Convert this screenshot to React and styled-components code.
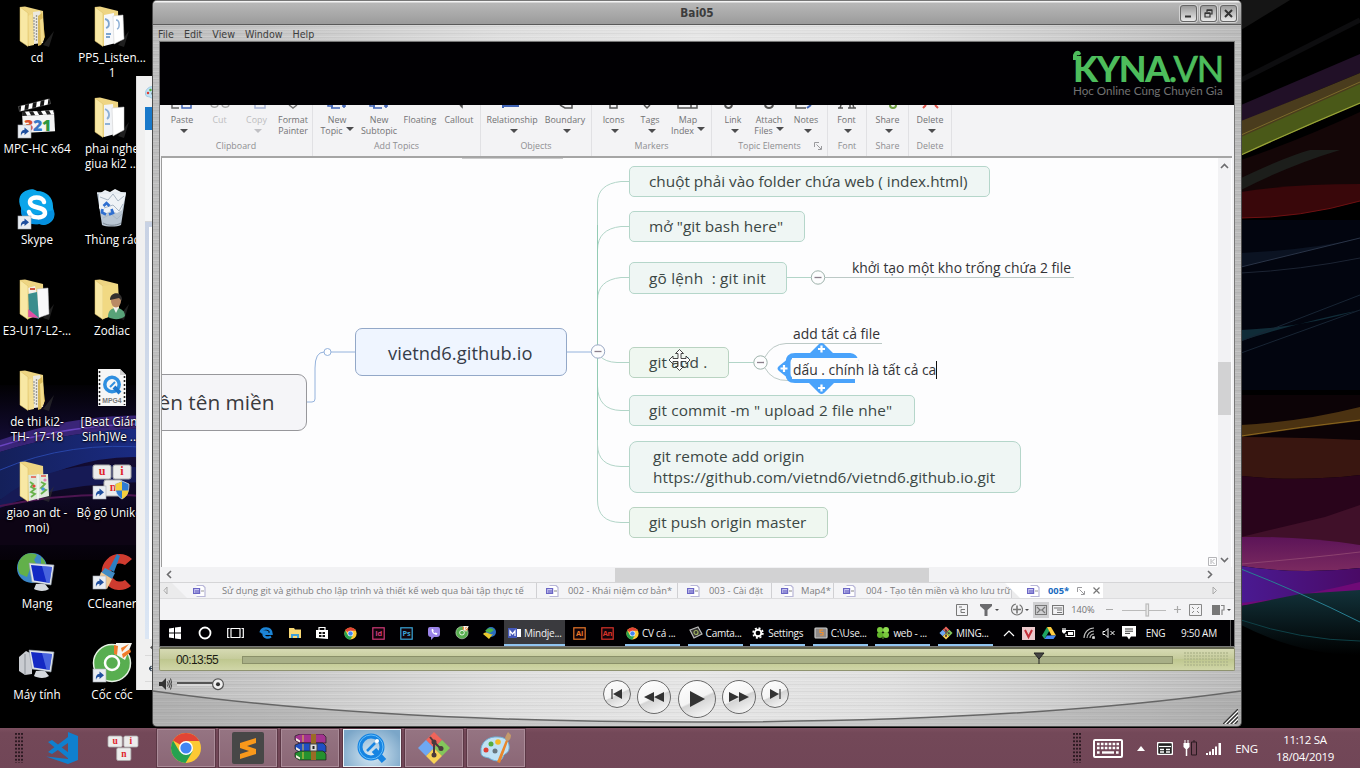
import React from "react";
import styled, { createGlobalStyle, css } from "styled-components";

const UI = `"Open Sans", "Noto Sans", sans-serif`;
const TAHOMA = `"DejaVu Sans Condensed", "Liberation Sans", sans-serif`;

const Global = createGlobalStyle`
  html, body { margin: 0; padding: 0; background: #000; }
  *, *::before, *::after { box-sizing: border-box; }
  svg { display: block; flex: none; }
`;

/* ---------- desktop ---------- */

const Desktop = styled.main`
  position: relative;
  width: 1360px;
  height: 768px;
  overflow: hidden;
  background: #000;
  font-family: ${UI};
  display: flex;
  flex-direction: column;
`;

const Wallpaper = styled.svg`
  position: absolute;
  inset: 0;
`;

const ShortcutGrid = styled.div`
  position: relative;
  flex: none;
  height: 728px;
  display: grid;
  grid-auto-flow: column;
  grid-template-rows: repeat(8, 91px);
  grid-auto-columns: 75px;
  justify-content: start;
  align-content: start;
  padding-top: 3px;
`;

const Shortcut = styled.div`
  display: flex;
  flex-direction: column;
  align-items: center;
  width: 74px;
`;

const ShortcutLabel = styled.span`
  margin-top: -1px;
  font-size: 11.7px;
  line-height: 15px;
  color: #fff;
  white-space: pre;
  text-align: center;
  text-shadow: 0 1px 2px #000, 0 0 2px #000;
`;

const PaintWindow = styled.section`
  position: absolute;
  left: 136px;
  top: 76px;
  width: 30px;
  height: 614px;
  background: #f0f0f0;
  padding-left: 8px;
  border-left: 1px solid #ddd;
`;
const PaintTitle = styled.div`
  height: 31px;
  display: flex;
  align-items: center;
`;
const PaintFile = styled.div`
  height: 23px;
  background: #1979ca;
`;
const PaintRibbon = styled.div`
  height: 92px;
  background: #f5f6f7;
  border-bottom: 1px solid #d5d6d8;
`;
const PaintWork = styled.div`
  height: 417px;
  background: linear-gradient(#c8d2e4, #dbe6f4);
  padding: 5px 0 0 4px;
`;
const PaintSheet = styled.div`
  height: 412px;
  background: #fff;
`;
const PaintFooter = styled.div`
  height: ${(p) => p.$h}px;
  display: flex;
  align-items: center;
  padding-left: 4px;
  background: #f0f0f0;
  border-bottom: 1px solid #dadada;
`;

/* ---------- player window ---------- */

const brushed = css`
  background-image:
    repeating-linear-gradient(180deg, rgba(255,255,255,.16) 0 1px, rgba(0,0,0,.025) 1px 2px, rgba(255,255,255,.05) 2px 4px, rgba(0,0,0,.045) 4px 5px, transparent 5px 7px),
    linear-gradient(90deg, #bdbdbd 0%, #c6c6c6 10%, #dedede 32%, #e6e6e6 50%, #dfdfdf 68%, #c6c6c6 90%, #bababa 100%);
`;

const Player = styled.section`
  position: absolute;
  left: 152px;
  top: 0;
  width: 1090px;
  height: 727px;
  border: 1px solid #4c4c4c;
  border-top-color: #777;
  border-radius: 5px;
  overflow: hidden;
  ${brushed}
  display: flex;
  flex-direction: column;
`;

const TitleBar = styled.header`
  height: 24px;
  flex: none;
  display: grid;
  grid-template-columns: 1fr auto 1fr;
  align-items: center;
  background: linear-gradient(#f4f4f4 0 1px, #b8b8b8 2px, #9b9b9b 100%);
  border-bottom: 1px solid #5a5a5a;
`;
const Title = styled.h1`
  grid-column: 2;
  margin: 1px 0 0;
  font: bold 11.7px/16px ${TAHOMA};
  color: #3c3c3c;
`;
const WindowButtons = styled.div`
  display: flex;
  justify-content: flex-end;
  gap: 3px;
  padding: 1px 4px 0 0;
`;
const WindowButton = styled.button`
  width: 17px;
  height: 17px;
  padding: 0;
  display: grid;
  place-items: center;
  border: 1px solid #666;
  border-radius: 3px;
  background: linear-gradient(#9b9b9b, #e8e8e8);
  box-shadow: 0 0 0 1px #d2d2d2;
`;

const MenuBar = styled.nav`
  height: 17px;
  flex: none;
  display: flex;
  gap: 10px;
  padding-left: 5px;
  font: 10.6px/19px ${TAHOMA};
  color: #3d3d3d;
`;

const Screen = styled.div`
  width: 1074px;
  height: 604px;
  flex: none;
  margin-left: 7px;
  background: #f3f3f5;
  display: flex;
  flex-direction: column;
  box-shadow: 0 0 0 1px #777;
`;

const Banner = styled.div`
  height: 63px;
  flex: none;
  background: #010003;
  display: flex;
  flex-direction: column;
  align-items: flex-end;
  padding: 10px 11px 0 0;
`;
const Brand = styled.div`
  position: relative;
  width: 150px;
  height: 32px;
  display: flex;
  font: 900 36px/32px Lato, sans-serif;
  letter-spacing: -1.5px;
  color: #4dbd5c;
  white-space: nowrap;
`;
const BrandSuffix = styled.span`
  font-weight: 400;
  letter-spacing: -1.1px;
  -webkit-text-stroke: 0.7px #4dbd5c;
`;
const Leaf = styled.svg`
  position: absolute;
  left: 0;
  top: -2px;
`;
const Tagline = styled.div`
  width: 150px;
  font: 11.65px/13px Lato, sans-serif;
  color: #717171;
  white-space: nowrap;
`;

/* ---------- ribbon ---------- */

const Ribbon = styled.div`
  height: 51px;
  flex: none;
  display: flex;
  background: #f3f3f5;
  font-size: 8.9px;
  line-height: 11px;
  color: #727274;
`;
const RibbonGroup = styled.div`
  width: ${(p) => p.$w}px;
  display: flex;
  flex-direction: column;
  border-right: 1px solid #e1e1e4;
`;
const RibbonItems = styled.div`
  display: flex;
  height: 35px;
  padding-left: ${(p) => p.$pad}px;
`;
const RibbonItem = styled.div`
  width: ${(p) => p.$w}px;
  flex: none;
  display: flex;
  flex-direction: column;
  align-items: center;
  white-space: nowrap;
  color: ${(p) => (p.$off ? "#bdbdc0" : "#727274")};
`;
const RibbonText = styled.span`
  margin-top: 4px;
  text-align: center;
`;
const Second = styled.span`
  display: flex;
  align-items: flex-start;
  gap: 3px;
  height: 11px;
`;
const Caret = styled.i`
  width: 0;
  height: 0;
  border: ${(p) => p.$s ?? 4}px solid transparent;
  border-top-color: ${(p) => (p.$off ? "#c0c0c4" : "#4c4c4e")};
  border-bottom: 0;
  margin-top: ${(p) => p.$top ?? 4}px;
  margin-left: ${(p) => p.$left ?? 0}px;
`;
const RibbonCaption = styled.div`
  display: flex;
  justify-content: center;
  position: relative;
  color: #8e8e91;
  white-space: nowrap;
`;
const Launcher = styled.span`
  position: absolute;
  right: 5px;
  top: 2px;
`;

/* ---------- mind map ---------- */

const MapArea = styled.div`
  height: 411px;
  flex: none;
  display: flex;
  margin-left: 1px;
  margin-right: 2px;
  border-top: 2px solid #a5a5a5;
  border-left: 1px solid #9c9c9c;
  background: #fdfdfe;
`;
const Canvas = styled.div`
  position: relative;
  width: 1056px;
  height: 409px;
  overflow: hidden;
`;
const Lines = styled.svg`
  position: absolute;
  left: 0;
  top: 0;
`;
const tones = {
  green: ["#eff6f4", "#b5d6ca", "#3b4744"],
  lime: ["#eff7f0", "#b9d3c1", "#3b4744"],
  blue: ["#eff5ff", "#93a8c8", "#353c49"],
  gray: ["#f5f5f8", "#97979b", "#3a3a3d"],
};
const Topic = styled.div`
  position: absolute;
  left: ${(p) => p.$x - 162}px;
  top: ${(p) => p.$y - 158}px;
  width: ${(p) => p.$w}px;
  height: ${(p) => p.$h}px;
  padding-left: ${(p) => p.$pad ?? 19}px;
  display: flex;
  align-items: center;
  border: 1px solid ${(p) => tones[p.$tone][1]};
  border-radius: ${(p) => p.$r ?? 5}px;
  background: ${(p) => tones[p.$tone][0]};
  color: ${(p) => tones[p.$tone][2]};
  font-size: ${(p) => p.$size ?? 15.35}px;
  letter-spacing: ${(p) => p.$ls ?? 0}px;
  line-height: 21px;
  white-space: pre;
`;
const Note = styled.div`
  position: absolute;
  left: ${(p) => p.$x - 162}px;
  top: ${(p) => p.$y - 158}px;
  font-size: 13.9px;
  line-height: 20px;
  color: #333336;
  white-space: nowrap;
`;
const VScroll = styled.div`
  width: 13px;
  display: flex;
  flex-direction: column;
  align-items: center;
  background: #f2f2f4;
  padding: 4px 0 3px;
`;
const VThumb = styled.div`
  width: 13px;
  height: 53px;
  margin: 191px 0 auto;
  background: #d2d2d3;
`;
const HScroll = styled.div`
  height: 15px;
  flex: none;
  display: flex;
  align-items: center;
  background: #f2f2f4;
  margin-left: 2px;
  padding: 0 20px 0 3px;
`;
const HThumb = styled.div`
  width: 314px;
  height: 14px;
  margin: 0 auto 0 441px;
  background: #d2d2d3;
`;

/* ---------- document tabs and status ---------- */

const Tabs = styled.div`
  height: 17px;
  flex: none;
  display: flex;
  align-items: stretch;
  background: #ebebec;
  border-bottom: 1px solid #dcdcde;
  border-top: 1px solid #d5d5d7;
  font-size: 9.35px;
  color: #7d7d80;
`;
const TabArrow = styled.div`
  width: ${(p) => p.$w}px;
  display: flex;
  align-items: center;
  padding-left: ${(p) => p.$pad}px;
`;
const Tab = styled.div`
  width: ${(p) => p.$w}px;
  display: flex;
  align-items: center;
  flex: none;
  gap: ${(p) => p.$gap ?? 9}px;
  padding-left: ${(p) => p.$pad ?? 9}px;
  background: ${(p) => (p.$on ? "#fff" : "#f4f4f6")};
  color: ${(p) => (p.$on ? "#1b6bc0" : "inherit")};
  font-weight: ${(p) => (p.$on ? 700 : 400)};
  border-right: 1px solid ${(p) => (p.$on ? "#fff" : "#d0d0d3")};
  clip-path: ${(p) => (p.$slant ? `polygon(0 0, 100% 0, 100% 100%, ${p.$slant}px 100%)` : "none")};
  margin-left: ${(p) => p.$ml ?? 0}px;
  white-space: nowrap;
`;
const StatusBar = styled.div`
  height: 21px;
  flex: none;
  display: flex;
  justify-content: flex-end;
  align-items: center;
  padding-right: 2px;
  font-size: 9.2px;
  color: #727274;
`;
const StatusCell = styled.div`
  width: ${(p) => p.$w}px;
  margin-right: ${(p) => p.$mr ?? 0}px;
  height: 16px;
  flex: none;
  display: flex;
  align-items: center;
  justify-content: center;
  background: ${(p) => (p.$on ? "#d0d0d2" : "none")};
`;

/* ---------- recorded taskbar ---------- */

const MiniBar = styled.div`
  height: 26px;
  flex: none;
  display: flex;
  background: #010003;
  color: #f2f2f2;
  font-size: 10px;
  letter-spacing: -0.25px;
`;
const MiniCell = styled.div`
  width: ${(p) => p.$w}px;
  display: grid;
  place-items: center;
  flex: none;
`;
const MiniTask = styled.div`
  width: ${(p) => p.$w ?? 55}px;
  flex: none;
  display: flex;
  align-items: center;
  gap: 3px;
  padding: 2px 0 0 ${(p) => (p.$on ? 4 : 1)}px;
  background: ${(p) => (p.$on ? "#3a3a3e" : "none")};
  border-bottom: 2px solid #91c5f0;
  white-space: nowrap;
`;
const MiniTasks = styled.div`
  display: flex;
  gap: 7.6px;
  margin: 0 6px 0 4px;
`;
const PeekEdge = styled.div`
  margin-left: 4px;
  width: 1px;
  background: #555;
`;

/* ---------- player controls ---------- */

const TimeBar = styled.div`
  height: 24px;
  flex: none;
  margin: 1px 6px 0 6px;
  display: flex;
  align-items: center;
  border: 1px solid #8f936f;
  border-top: 2px solid #63654f;
  border-radius: 2px;
  background: linear-gradient(#d6dab3, #c6cc9c 45%, #bfc78f 50%, #d0d6a8);
`;
const Elapsed = styled.span`
  width: 82px;
  padding-left: 16px;
  font: 12px/16px "Liberation Sans", sans-serif;
  letter-spacing: -0.58px;
  color: #1b1b14;
`;
const Track = styled.div`
  position: relative;
  width: 931px;
  height: 8px;
  background: #a8af87;
  border: 1px solid #8a9069;
`;
const Playhead = styled.svg`
  position: absolute;
  left: 790px;
  top: -5px;
`;
const TimeDots = styled.div`
  margin-left: 11px;
  width: 44px;
  height: 15px;
  background-image: radial-gradient(circle at 1px 1px, #adb48a 0.6px, transparent 0.9px);
  background-size: 3px 3px;
`;

const Controls = styled.div`
  position: relative;
  flex: 1;
  display: grid;
  grid-template-columns: 1fr auto 1fr;
`;
const Sweep = styled.svg`
  position: absolute;
  left: 0;
  bottom: 0;
`;
const Volume = styled.div`
  position: relative;
  display: flex;
  align-items: flex-start;
  gap: 4px;
  padding: 6px 0 0 5px;
`;
const Transport = styled.div`
  position: relative;
  display: flex;
  align-items: flex-start;
  padding: 9px 2px 0 0;
`;
const Round = styled.button`
  width: ${(p) => p.$d}px;
  height: ${(p) => p.$d}px;
  margin: 0 ${(p) => p.$mr ?? 0}px 0 0;
  padding: 0;
  display: grid;
  place-items: center;
  border: 1.5px solid #6a6a6a;
  border-radius: 50%;
  background: linear-gradient(155deg, #fff 0%, #f4f4f4 50%, #d4d4d4 54%, #ffffff 100%);
`;
const Resize = styled.svg`
  position: absolute;
  right: 3px;
  bottom: 2px;
`;

/* ---------- host taskbar ---------- */

const Taskbar = styled.footer`
  position: relative;
  height: 40px;
  flex: none;
  display: flex;
  align-items: center;
  background: linear-gradient(#7c4f60, #734858 12%, #714657);
  color: #fff;
  font-size: 11.5px;
`;
const Grip = styled.div`
  width: 9px;
  height: 30px;
  margin: 0 ${(p) => p.$mr ?? 0}px 0 ${(p) => p.$ml ?? 0}px;
  background-image: radial-gradient(circle at 1px 1px, #2d1a22 0.9px, transparent 1.2px);
  background-size: 3px 3.7px;
`;
const Pinned = styled.div`
  width: 61px;
  display: grid;
  place-items: center;
`;
const TaskButtons = styled.div`
  display: flex;
  gap: 4px;
  margin-left: 4px;
`;
const TaskButton = styled.div`
  width: 58px;
  height: 38px;
  display: grid;
  place-items: center;
  border: 1px solid ${(p) => (p.$on ? "#e9f2f8" : "#ab8c99")};
  box-shadow: 0 0 0 1px #5b3745;
  background: ${(p) => (p.$on ? "radial-gradient(ellipse at 50% 70%, #d7e9f5, #7ba6c8 85%)" : "linear-gradient(#957482, #8b6776)")};
`;
const Tray = styled.div`
  margin-left: auto;
  display: flex;
  align-items: center;
`;
const TrayCell = styled.div`
  width: ${(p) => p.$w}px;
  display: grid;
  place-items: center;
  letter-spacing: -0.25px;
`;
const Clock = styled.div`
  width: 97px;
  text-align: center;
  line-height: 17px;
  letter-spacing: -0.28px;
  padding-right: 13px;
`;

/* ---------- drawings ---------- */

const Arrow = ({ x = 5, y = 32 }) => (
  <g transform={`translate(${x} ${y})`}>
    <rect width="13" height="13" fill="#e9edf2" stroke="#a8adb5" strokeWidth=".6" />
    <path d="M3 11c-.5-4 1-6 3.500-6.200V2.500l4.500 3.800-4.500 3.800V7.800C4.500 7.800 3.500 9 3 11Z" fill="#1f4f9e" />
  </g>
);

const Folder = ({ kind }) => (
  <svg width="48" height="48" viewBox="0 0 48 48">
    <path d="M30 42 41 28 36 44Z" fill="#333" opacity=".6" />
    <path d="M7 4 12 3.500 30 8 31 37 15 43Z" fill="#eed583" />
    {kind === "stack" && (
      <>
        <path d="M20 9 27 8 31 30 30 40 21 41Z" fill="#ece9df" />
        <path d="M21 14v24M23.500 12v26" stroke="#9a9a94" strokeWidth="1.300" strokeDasharray="2 1" />
        <path d="M15 13 19 11 21 42 16 43Z" fill="#f4df94" />
        <path d="M25 13 29 10 32 34 28 42 25 43Z" fill="#d9b95a" />
        <path d="M27 17 30 15 31 36 28 41Z" fill="#f3dc8d" />
      </>
    )}
    {kind === "docs" && (
      <>
        <path d="M16 12 26 10 28 40 16 43Z" fill="#f7f8fa" />
        <path d="M17 16c5 1 5 8 1 9m0 6h5m-5 3h4" stroke="#7ea5cf" strokeWidth="1.800" fill="none" />
        <path d="M25 13 35 12 36 36 26 41Z" fill="#fff" stroke="#c8c8c8" strokeWidth=".5" />
        <path d="M28 17c4 0 4 8 1 9" stroke="#8fb1d6" strokeWidth="1.500" fill="none" />
      </>
    )}
    {kind === "blank" && (
      <>
        <path d="M16 11 25 10 27 40 16 43Z" fill="#f1f3f6" />
        <path d="M17 15c5 2 5 8 2 10m-2 5h5" stroke="#8fb1d6" strokeWidth="1.800" fill="none" />
        <path d="M24 14 36 13 36 36 25 42Z" fill="#fff" stroke="#c8c8c8" strokeWidth=".5" />
      </>
    )}
    {kind === "books" && (
      <>
        <path d="M15 12 22 10 24 20 16 20Z" fill="#f3efe9" />
        <path d="M17 12h5v2h-5z" fill="#d05740" />
        <path d="M24 13 35 12 36 38 25 42Z" fill="#f8f8fa" stroke="#c0c0c4" strokeWidth=".5" />
        <path d="M15 18 24 16 26 43 16 40Z" fill="#3a8d8e" />
        <path d="M15 33 26 42 15 41Z" fill="#e04fa5" />
      </>
    )}
    {kind === "pictures" && (
      <>
        <path d="M15 17 35 16 36 38 16 43Z" fill="#dfe9da" />
        <path d="M25 16v26" stroke="#fff" />
        <path d="M17 24l3 2-2 3 4 2-4 3 4 2-4 3M28 24l4 2-4 4 5 2-5 4" stroke="#68b24a" strokeWidth="1.800" fill="none" />
        <path d="M18 19h5M28 18h5" stroke="#e2564a" strokeWidth="1.600" />
        <circle cx="21" cy="28" r="1.600" fill="#e0473b" />
        <circle cx="30" cy="31" r="1.800" fill="#4796d8" />
        <circle cx="32" cy="22" r="1.600" fill="#e77bb5" />
      </>
    )}
    <path d="M7 4 15 10 15 43.500 7 38Z" fill="#f8e8a4" stroke="#d8bd62" strokeWidth=".5" />
    {kind === "person" && (
      <>
        <path d="M15 10 30 8 31 37 15 43Z" fill="#f1d983" />
        <path d="M20 41c0-7 4-9 8-9 5 0 9 3 9 8-4 4-12 4-17 1Z" fill="#58a278" />
        <path d="M25 31h6l-3 6Z" fill="#f2f2ee" />
        <ellipse cx="28" cy="25" rx="5" ry="6.500" fill="#b98a64" />
        <path d="M22 24c0-9 13-9 12 1l-3-3c-3 1-6 1-9 2Z" fill="#33302f" />
      </>
    )}
  </svg>
);

const Clapper = () => (
  <svg width="48" height="48" viewBox="0 0 48 48">
    <g transform="rotate(-14 8 15)">
      <rect x="6" y="12" width="32" height="5" fill="#141414" stroke="#888" strokeWidth=".4" />
      <path d="M9 12h4l-2 5H7zM17 12h4l-2 5h-4zM25 12h4l-2 5h-4zM33 12h4l-2 5h-4z" fill="#fff" />
    </g>
    <g transform="rotate(-3 8 18)">
      <path d="M9 18h32v21H9Z" fill="#f4f4f4" />
      <path d="M9 18h32v4H9Z" fill="#222" />
      <path d="M12 18h4l2 4h-4zM20 18h4l2 4h-4zM28 18h4l2 4h-4zM36 18h4l1 4h-3z" fill="#fff" />
    </g>
    <text x="11" y="36.500" fontFamily="Open Sans" fontWeight="800" fontSize="16" letterSpacing="-.4">
      <tspan fill="#d9502c">3</tspan><tspan fill="#3877c8">2</tspan><tspan fill="#2d9842">1</tspan>
    </text>
    <Arrow y={31} />
  </svg>
);

const Skype = () => (
  <svg width="48" height="48" viewBox="0 0 48 48">
    <path d="M15 5c3-1 6-1 9 1 10 0 16 7 16 15 0 3 1 4 1.500 8 0 8-8 13-15 10C14 41 7 33 8 23 4 14 7 7 15 5Z" fill="#0aa5ea" />
    <path d="M8 23c10 12 22 4 33 2 2 9-5 17-15 14C14 41 7 33 8 23Z" fill="#0080d6" opacity=".6" />
    <path d="M31 17c-1-6-14-6-14 0 0 7 15 4 15 11 0 6-14 6-16-1" fill="none" stroke="#fff" strokeWidth="4.500" strokeLinecap="round" />
    <Arrow y={31} />
  </svg>
);

const Bin = () => (
  <svg width="48" height="48" viewBox="0 0 48 48">
    <path d="M9 8 38 8 33 40C29 42 18 42 14 40Z" fill="#b9c6d3" />
    <path d="m11 9 6-4 5 2 5-3 6 3 5 1-4 17-5 3-6-2-7 3-5-6Z" fill="#eef2f6" />
    <path d="m12 12 8 3 5-6 5 7 6-5m-20 12 9-3 6 6 4-7M15 33l8-4 6 5 5-5" stroke="#a9b7c5" fill="none" />
    <path d="M9 8h29" stroke="#e4ebf2" strokeWidth="1.500" />
    <path d="m15.500 21 3-3 3 3m2 3 1.500 4-4 1.500m-3 0-4-2 .5-3.500" stroke="#2f6fd0" strokeWidth="2.600" fill="none" />
    <path d="M15 38c5 3 13 3 18 0" stroke="#7f8b97" fill="none" />
  </svg>
);

const Mpeg = () => (
  <svg width="48" height="48" viewBox="0 0 48 48">
    <path d="M10 2h22l6 6v31H10Z" fill="#f6f6f6" />
    <path d="M11.500 4v34M36.500 9v29" stroke="#222" strokeWidth="1.600" strokeDasharray="2 2" />
    <path d="M32 2v6h6Z" fill="#cfcfcf" />
    <circle cx="24" cy="17.500" r="7.200" fill="none" stroke="#2f8fe0" strokeWidth="3.500" />
    <path d="m26 20 6 6" stroke="#1c76cc" strokeWidth="4" />
    <path d="m22 20 5-5" stroke="#2f8fe0" strokeWidth="2" />
    <text x="24" y="36" textAnchor="middle" fontSize="6.800" fontWeight="700" fontFamily="Liberation Sans" fill="#777">MPG4</text>
  </svg>
);

const Keys = ({ s = 1 }) => (
  <g transform={`scale(${s})`} fontFamily="Liberation Serif" fontWeight="700" fontSize="12" fill="#e0242d" textAnchor="middle">
    <rect x="0" y="0" width="18" height="14" rx="2" fill="#ececec" stroke="#aaa" />
    <rect x="20" y="0" width="18" height="14" rx="2" fill="#ececec" stroke="#aaa" />
    <rect x="11" y="15" width="18" height="16" rx="2" fill="#ececec" stroke="#aaa" />
    <text x="9" y="10">u</text><text x="29" y="10">i</text><text x="20" y="26">n</text>
  </g>
);
const Unikey = () => (
  <svg width="48" height="48" viewBox="0 0 48 48">
    <g transform="translate(5 7)"><Keys /></g>
    <path d="m27 26 7-3 7 3c0 8-2 12-7 15-5-3-7-7-7-15Z" fill="#2f7bd2" stroke="#eee" strokeWidth=".7" />
    <path d="M34 23.500 27.500 26v6.500H34V41c5-3 6-5 6.500-8.500H34Z" fill="#f5cf3c" />
    <Arrow y={28} />
  </svg>
);

const Monitor = ({ x, y }) => (
  <g transform={`translate(${x} ${y})`}>
    <path d="M7 21h9l4 5c-4 3-12 2-15 0Z" fill="#d5d9de" />
    <path d="M0 0 25 2 22 22 3 19Z" fill="#dfe5eb" stroke="#8e98a5" strokeWidth=".6" />
    <path d="M2 2 23 4 20.500 20 5 17.500Z" fill="#1329c4" />
    <path d="m13 3 10 1-2.500 16-3-.5Z" fill="#6d8cf0" opacity=".6" />
  </g>
);
const Network = () => (
  <svg width="48" height="48" viewBox="0 0 48 48">
    <circle cx="19" cy="19" r="15" fill="#3b86c8" />
    <path d="M9 8c5-5 12-4 15-2l-3 5 3 5-7 4-3 8-7-3C4 20 4 13 9 8ZM28 8c4 3 6 8 5 12l-5-3Z" fill="#62b04a" />
    <Monitor x={16} y={14} />
  </svg>
);
const Computer = () => (
  <svg width="48" height="48" viewBox="0 0 48 48">
    <path d="m6 17 7-6 6 3v20l-7 1-6-4Z" fill="#c9ccd1" />
    <path d="M12 14v21" stroke="#8b9097" />
    <Monitor x={16} y={10} />
  </svg>
);
const CCleaner = () => (
  <svg width="48" height="48" viewBox="0 0 48 48">
    <path d="M44 10a18 18 0 1 0-1 27l-6-6a9 9 0 1 1 0-15Z" fill="#cf3b2f" />
    <path d="m29 5 3 2-6 16-5-3Z" fill="#2c7fc2" />
    <path d="m17 19 10 5-3 6-11-6Z" fill="#408bc5" />
    <path d="m13 23 11 7-5 10-10-5Z" fill="#f0c894" />
    <Arrow y={27} />
  </svg>
);
const CocCoc = ({ size = 48, bare }) => (
  <svg width={size} height={size} viewBox="0 0 48 48">
    <circle cx="24" cy="23" r="18.500" fill="#58ae50" stroke="#e6f2e4" strokeWidth="1.500" />
    <path d="M27 14 28 3 44 3 37 20Z" fill="#f5f5f0" />
    <path d="m26 5 4 1-1 9-3-1ZM34 14l8-5 1 3-8 6ZM33 8l8-4-7 8z" fill="#f07c2b" />
    <circle cx="24" cy="23" r="7" fill="#58ae50" stroke="#fff" strokeWidth="2.500" />
    {!bare && <Arrow y={29} />}
  </svg>
);

const Chrome = ({ size }) => (
  <svg width={size} height={size} viewBox="0 0 32 32">
    <circle cx="16" cy="16" r="15" fill="#fcc934" />
    <path d="M16 16 3 8.500A15 15 0 0 1 29 8.500L29 9H16Z" fill="#e24435" />
    <path d="M3 8.500A15 15 0 0 0 15.500 31L22.500 19.500 16 16 9.500 19.500Z" fill="#26a150" />
    <circle cx="16" cy="16" r="7" fill="#fff" />
    <circle cx="16" cy="16" r="5.600" fill="#4285f4" />
  </svg>
);
const VSCode = () => (
  <svg width="32" height="32" viewBox="0 0 32 32" fill="#0f80cf">
    <path d="M22 0 32 4v24l-10 4L0 24.500l22 2.500Z" />
    <path d="m2 10 4-2 17 13v6ZM2 20 22 5v6L6 22Z" />
  </svg>
);
const Sublime = () => (
  <svg width="32" height="32" viewBox="0 0 32 32">
    <rect width="32" height="32" rx="2" fill="#474747" />
    <path d="m8 11 16-5v5l-9 3 9 3v5L8 27v-5l9-3-9-3Z" fill="#f9981b" />
  </svg>
);
const WinRar = () => (
  <svg width="33" height="28" viewBox="0 0 33 28">
    {[["#a3338f", 1], ["#1f4fc4", 10], ["#25912f", 18]].map(([c, y]) => (
      <g key={c}>
        <path d={`M1 ${y + 1}L6 ${y - 1}H29L32 ${y + 2}V${y + 8}H5L1 ${y + 5}Z`} fill={c} stroke="#1d1d1d" strokeWidth=".7" />
        <path d={`M2 ${y + 3}l4 2.500v2l-4-2z`} fill="#f4efe0" />
        <path d={`M9 ${y}v7`} stroke="#e2bf43" />
      </g>
    ))}
    <path d="M17 0h5v26h-5Z" fill="#9a6b25" />
    <rect x="16" y="10" width="7" height="7" fill="#ddd" stroke="#444" />
    <path d="M19.500 12v3" stroke="#222" strokeWidth="2" />
  </svg>
);
const QuickTime = () => (
  <svg width="30" height="30" viewBox="0 0 30 30">
    <circle cx="14" cy="14" r="11" fill="none" stroke="#1684e2" strokeWidth="5" />
    <path d="m17 17 10 11" stroke="#1684e2" strokeWidth="6" />
    <circle cx="14" cy="14" r="12" fill="none" stroke="#63bdfa" strokeWidth="1" />
    <path d="m10 18 8-8" stroke="#1684e2" strokeWidth="2.500" />
    <circle cx="20" cy="8" r="2" fill="#fff" />
  </svg>
);
const Git = ({ size = 34 }) => (
  <svg width={size} height={size} viewBox="0 0 34 34">
    <path d="m17 1 8 8-8 8-8-8Z" fill="#f0645a" />
    <path d="m25 9 8 8-8 8-8-8Z" fill="#83c65b" />
    <path d="m9 9 8 8-8 8-8-8Z" fill="#6ea8f2" />
    <path d="m17 17 8 8-8 8-8-8Z" fill="#f6d257" />
    <path d="M13 6l4 5v14M17 11l6 6" stroke="#4a3a3c" strokeWidth="2" fill="none" />
    <circle cx="17" cy="11" r="2.500" fill="#4a3a3c" /><circle cx="24" cy="17.500" r="2.500" fill="#4a3a3c" /><circle cx="17" cy="24" r="2.500" fill="#4a3a3c" />
  </svg>
);
const Palette = ({ size = 32 }) => (
  <svg width={size} height={size} viewBox="0 0 32 32">
    <path d="M1 20C0 10 9 4 18 5c8 0 12 5 11 12-1 5-5 4-6 8-2 6-10 4-14 1-4-1-8-1-8-6Z" fill="#bfe1f4" stroke="#6fb1d6" />
    <circle cx="6" cy="18" r="2.500" fill="#dd3f34" /><circle cx="11" cy="12" r="2.500" fill="#56ac3c" />
    <circle cx="18" cy="10" r="2.800" fill="#f3b924" /><circle cx="15" cy="19" r="2.500" fill="#68777f" />
    <path d="m17 30 9-22 2 1-8 22Z" fill="#e8872c" />
    <path d="M25 7c0-3 2-5 3-7l3 3c0 3-1 5-3 6Z" fill="#c49a6b" />
  </svg>
);

const Tile = ({ label, c }) => (
  <svg width="13" height="13" viewBox="0 0 13 13">
    <rect x=".8" y=".8" width="11.400" height="11.400" fill="#120309" stroke={c} strokeWidth="1.200" />
    <text x="6.500" y="9.300" textAnchor="middle" fontFamily="Open Sans" fontSize="7.400" fontWeight="700" fill={c}>{label}</text>
  </svg>
);

const S = ({ w = 14, h = 14, children, ...r }) => (
  <svg width={w} height={h} viewBox={`0 0 ${w} ${h}`} fill="none" stroke="#fff" strokeWidth="1.200" {...r}>{children}</svg>
);

const DocIcon = () => (
  <S w={13} h={12} stroke="#6b66c4">
    <path d="M3.500.5h6.500l2 2v9H3.500" stroke="#b9b7d8" fill="#fff" />
    <path d="M.6 3.500h6v5h-6Z" fill="#c9c6f2" /><path d="M3 5v3M5 5v3" /><path d="M8 6h3" stroke="#999" />
  </S>
);

const Chevron = ({ d }) => (
  <S w={9} h={9} stroke="#6c6c6e" strokeWidth="1.600">
    <path d={{ up: "M1 6 4.500 2.500 8 6", down: "M1 3 4.500 6.500 8 3", left: "M6 1 2.500 4.500 6 8", right: "M3 1 6.500 4.500 3 8" }[d]} />
  </S>
);

const LauncherIcon = () => (
  <S w={8} h={8} stroke="#9a9a9d" strokeWidth="1"><path d="M.5 5V.5H5M2.500 2.500l4.500 4.500M7.500 4v3.500H4" /></S>
);

/* bottoms of the ribbon icons that remain visible under the banner */
const stubs = {
  paste: <><path d="M1 0v3h7" stroke="#666" /><path d="M11 0v3h9V0" stroke="#3f63b5" /></>,
  cut: <><path d="M2 0c1 3 6 3 7 0M13 0c1 3 6 3 7 0" stroke="#aaa" /></>,
  copy: <path d="M9 0v3h10V0" stroke="#a9b5d6" />,
  brush: <path d="m7 0 4 3 4-3" stroke="#777" />,
  topic: <><path d="M2 0v1h5M5 3h9M6 0v3" stroke="#3f63b5" /><path d="M18 0v3m-2-2h4" stroke="#3f63b5" /></>,
  none: null,
  call: <path d="m12 0 2 2V0" stroke="#555" />,
  rel: <path d="M2 3V1h16" stroke="#3f63b5" strokeWidth="2" />,
  bound: <path d="m6 0 5 3h7V0" stroke="#555" />,
  box: <path d="M7 0v3h7V0" stroke="#555" />,
  tag: <path d="m5 0 3 3 3-3" stroke="#555" />,
  map: <path d="M1 0v3h19V0M14 0v3" stroke="#555" />,
  link: <path d="M3 0c1 4 6 4 7 0" stroke="#555" strokeWidth="2" />,
  clip: <path d="M7 0c1 4 7 4 8 0" stroke="#555" strokeWidth="2" />,
  note: <><path d="M1 0v3h10" stroke="#555" /><path d="m12 3 4-3" stroke="#3f63b5" strokeWidth="2" /></>,
  font: <path d="M2 3h5M4 3l1-3m7 3h8m-6 0V0m4 3-1-3" stroke="#555" />,
  share: <path d="M13 0c0 4 6 4 6 0" stroke="#6fa043" strokeWidth="2" />,
  del: <><path d="m4 3 3-3M16 0l3 3" stroke="#e0564b" strokeWidth="2" /></>,
};

const groups = [
  { w: 153, pad: 3, cap: "Clipboard", items: [[38, "paste", "Paste", null, 1], [37, "cut", "Cut", null, 0, 1], [37, "copy", "Copy", null, 1, 1], [36, "brush", "Format", "Painter"]] },
  { w: 168, pad: 3, cap: "Add Topics", items: [[42, "topic", "New", "Topic", 1], [42, "topic", "New", "Subtopic"], [40, "none", "Floating"], [38, "call", "Callout"]] },
  { w: 111, pad: 3, cap: "Objects", items: [[56, "rel", "Relationship", null, 1], [50, "bound", "Boundary", null, 1]] },
  { w: 120, pad: 3, cap: "Markers", items: [[37, "box", "Icons", null, 1], [36, "tag", "Tags", null, 1], [40, "map", "Map", "Index", 1]] },
  { w: 116, pad: 3, cap: "Topic Elements", launch: 1, items: [[36, "link", "Link", null, 1], [36, "clip", "Attach", "Files", 1], [38, "note", "Notes", null, 1]] },
  { w: 39, pad: 0, cap: "Font", items: [[37, "font", "Font", null, 1]] },
  { w: 42, pad: 0, cap: "Share", items: [[41, "share", "Share", null, 1]] },
  { w: 43, pad: 0, cap: "Delete", items: [[42, "del", "Delete", null, 1]] },
];

const shortcuts = [
  ["cd", <Folder kind="stack" />],
  ["MPC-HC x64", <Clapper />],
  ["Skype", <Skype />],
  ["E3-U17-L2-...", <Folder kind="books" />],
  ["de thi ki2-\nTH- 17-18", <Folder kind="stack" />],
  ["giao an dt -\nmoi)", <Folder kind="pictures" />],
  ["Mạng", <Network />],
  ["Máy tính", <Computer />],
  ["PP5_Listen...\n1", <Folder kind="docs" />],
  ["phai nghe\ngiua ki2 ...", <Folder kind="blank" />],
  ["Thùng rác", <Bin />],
  ["Zodiac", <Folder kind="person" />],
  ["[Beat Gián  \nSinh]We ... ", <Mpeg />],
  ["Bộ gõ Unikey", <Unikey />],
  ["CCleaner", <CCleaner />],
  ["Cốc cốc", <CocCoc />],
];

const Background = () => (
  <Wallpaper width="1360" height="768" viewBox="0 0 1360 768" fill="none">
    <defs>
      <linearGradient id="bl" x1="0" y1="0" x2="1" y2="0"><stop stopColor="#14205a" /><stop offset="1" stopColor="#1b2c86" /></linearGradient>
      <linearGradient id="nv" x1="0" y1="0" x2="0" y2="1"><stop stopColor="#020104" /><stop offset=".35" stopColor="#150d38" /><stop offset="1" stopColor="#050108" /></linearGradient>
      <linearGradient id="vi" x1="0" y1="0" x2="1" y2="0"><stop stopColor="#4a1a92" /><stop offset="1" stopColor="#4a0a66" /></linearGradient>
      <linearGradient id="mg" x1="0" y1="0" x2="0" y2="1"><stop stopColor="#5c1458" /><stop offset="1" stopColor="#7b2a60" /></linearGradient>
      <linearGradient id="te" x1="0" y1="0" x2="0" y2="1"><stop stopColor="#12323a" /><stop offset="1" stopColor="#000" /></linearGradient>
    </defs>
    <path d="M0 385H153V560H0Z" fill="url(#nv)" />
    <path d="M0 440Q80 412 153 416V428Q70 430 0 452Z" fill="#3a2578" />
    <path d="M0 452Q70 430 153 428V458Q80 450 0 500Z" fill="url(#bl)" />
    <path d="M0 446Q70 424 153 424" stroke="#6a44c0" strokeWidth="1.500" />
    <path d="M0 470Q70 440 153 448" stroke="#2845a8" />
    <path d="M0 500Q60 452 153 470V482Q60 482 0 508Z" fill="#161a55" />
    <path d="M0 506Q80 490 153 497" stroke="#4c1550" strokeWidth="2" />
    <path d="M0 520Q80 505 153 520V545H0Z" fill="#0d0414" />
    <path d="M1241 0H1290L1241 30Z" fill="#151515" />
    <path d="M1241 80 1360 20" stroke="#0d0d0f" strokeWidth="5" />
    <path d="M1241 105 1360 54V73L1241 122Z" fill="#211027" />
    <path d="M1241 121Q1300 98 1360 73V85L1241 138Z" fill="#4a3c1d" />
    <path d="M1241 135 1360 82" stroke="#7a6a2a" />
    <path d="M1241 137 1360 84V103L1241 155Z" fill="#4a5918" />
    <path d="M1241 155Q1300 128 1360 103" stroke="#99a437" strokeWidth="1.300" />
    <path d="M1241 160Q1300 140 1360 112V190L1241 198Z" fill="#140607" />
    <path d="M1241 178Q1290 155 1310 150L1340 150Q1290 165 1241 190Z" fill="#1c1e1b" />
    <path d="M1241 192Q1290 184 1360 184V201Q1300 218 1241 218Z" fill="#39070a" />
    <path d="M1241 218Q1300 218 1360 201" stroke="#6e1112" />
    <path d="M1241 220H1360V390H1241Z" fill="#02050f" />
    <path d="M1241 253Q1310 250 1360 238L1241 267Z" fill="#0b1322" />
    <path d="M1241 267 1360 238" stroke="#2a3447" /><path d="M1241 273Q1300 270 1360 258" stroke="#1c2433" />
    <path d="M1241 330Q1300 328 1360 310Q1300 322 1241 341Z" fill="#102c38" />
    <path d="M1241 341 1360 295M1241 353 1360 310" stroke="#182534" />
    <path d="M1241 395H1360V480H1241Z" fill="#0c0306" />
    <path d="M1241 425Q1300 422 1360 407V421Q1300 428 1241 437Z" fill="#4b3211" />
    <path d="M1241 436Q1300 427 1360 420" stroke="#8c671e" />
    <path d="M1241 437Q1300 437 1360 440V475Q1300 482 1241 476Z" fill="#391610" />
    <path d="M1241 476Q1300 482 1360 475V545H1241Z" fill="#29041b" />
    <path d="M1241 537 1325 517 1360 505V545Z" fill="#401029" />
    <path d="M1241 537Q1300 536 1360 545V568Q1300 575 1241 566Z" fill="url(#mg)" />
    <path d="M1241 564Q1310 558 1360 552" stroke="#8c426f" />
    <path d="M1241 566Q1300 575 1360 568V584Q1300 596 1241 605Z" fill="url(#vi)" />
    <path d="M1241 603Q1300 597 1360 582V592L1241 606Z" fill="#6f0a77" />
    <path d="M1300 594 1360 590V655Q1300 655 1241 625V606Z" fill="url(#te)" />
    <path d="M1241 569Q1300 592 1360 622" stroke="#287f92" /><path d="M1241 620Q1300 640 1360 641" stroke="#0e4147" />
  </Wallpaper>
);

const plus = (x, y) => <path d={`M${x - 3.500} ${y}h7M${x} ${y - 3.500}v7`} stroke="#fff" strokeWidth="2.200" />;
const minus = (x, y, c = "#9fb3ac") => (
  <g key={x}><circle cx={x} cy={y} r="6.700" fill="#fdfdfe" stroke={c} /><path d={`M${x - 3.500} ${y}h7`} stroke="#8b7f8b" strokeWidth="1.300" /></g>
);

const MindMap = () => (
  <Canvas>
    <Lines width="1056" height="409" viewBox="162 158 1056 409" fill="none" stroke="#b2d5c8">
      <path d="M462 157h101" stroke="#999" strokeWidth="3" />
      <path d="M307 402h5q3 0 3-3V368Q315 352 324 352M331 352h24M567 352h24" stroke="#94b2dc" />
      <circle cx="327.500" cy="352" r="3.500" fill="#fff" stroke="#94b2dc" />
      <path d="M629 181.500h-8Q597.500 184 597.500 203V500Q597.500 522 621 522.500h8M629 226.500h-8Q597.500 229 597.500 250M629 277.500h-8Q597.500 280 597.500 300M600 356Q605 362 617 362.500h12M597.500 386Q598 410 621 410.500h8M597.500 445Q598 466 621 466.500h8" />
      <path d="M597.500 225V440" stroke="#93cbb4" />
      <path d="M787 277.500h25M729 362.500h25" />
      <path d="M825 277.500h249M765 357Q772 344 786 343.500h96M765 368Q772 381 788 380.500" stroke="#bcc9c6" />
      {minus(598, 351.500, "#9aa9c4")}{minus(818, 277.500)}{minus(760.500, 362.500)}
      <path d="M1208.500 557.500h8v8h-8ZM1211 559v5M1214.500 559l-2.500 2.500 2.500 2.500" stroke="#b5b5b8" />
    </Lines>
    <Topic $x={100} $y={374} $w={207} $h={57} $pad={57.500} $tone="gray" $r={9} $size={20.800}>ên tên miền</Topic>
    <Topic $x={355} $y={328} $w={212} $h={48} $pad={32} $tone="blue" $r={7} $size={18.300} $ls={0.07}>vietnd6.github.io</Topic>
    <Topic $x={629} $y={166} $w={361} $h={31} $tone="green">chuột phải vào folder chứa web ( index.html)</Topic>
    <Topic $x={629} $y={211} $w={176} $h={31} $tone="green" $ls={0.06}>mở "git bash here"</Topic>
    <Topic $x={629} $y={262} $w={158} $h={32} $tone="green" $ls={0.2}>{"gõ lệnh  : git init"}</Topic>
    <Topic $x={629} $y={347} $w={100} $h={31} $tone="lime" $ls={0.15}>git add .</Topic>
    <Topic $x={629} $y={395} $w={286} $h={31} $tone="green" $ls={0.13}>git commit -m " upload 2 file nhe"</Topic>
    <Topic $x={629} $y={441} $w={392} $h={52} $pad={23} $tone="green" $r={8} $ls={0.06}>{"git remote add origin\nhttps://github.com/vietnd6/vietnd6.github.io.git"}</Topic>
    <Topic $x={629} $y={507} $w={199} $h={31} $tone="lime" $ls={0.04}>git push origin master</Topic>
    <Lines width="1056" height="409" viewBox="162 158 1056 409" fill="none">
      <path d="M856 361q-1-5-6-5.500h-55q-7 0-7 7v11q0 7 7 7h60" stroke="#4aa3fb" strokeWidth="5" />
      <path d="m809 354 10-10q2.500-2 5 0l10 10ZM809 383l10 10q2.500 2 5 0l10-10ZM789 358l-10 8q-3 2.500 0 5l10 8Z" fill="#4aa3fb" />
      <path d="M792 358h66v21h-66z" fill="#fdfdfe" />
      {plus(821.500, 349)}{plus(821.500, 388)}{plus(784, 368.500)}
      <path d="M936.500 361v18" stroke="#111" />
      <g stroke="#333" fill="#fff" strokeWidth=".9">
        <path d="m679.500 349.500 4 4h-2.500v5h5v-2.500l4 4-4 4v-2.500h-5v5h2.500l-4 4-4-4h2.500v-5h-5v2.500l-4-4 4-4v2.500h5v-5h-2.500Z" />
      </g>
    </Lines>
    <Note $x={852} $y={258}>khởi tạo một kho trống chứa 2 file</Note>
    <Note $x={793} $y={324}>add tất cả file</Note>
    <Note $x={793} $y={360}>dấu . chính là tất cả ca</Note>
  </Canvas>
);

const miniIcons = [
  [30, <S><path d="M1 2.500 6 1.800V6.500H1ZM7 1.600 13 .8v5.700H7ZM1 7.500h5v4.700L1 11.500ZM7 7.500h6v5.700l-6-.8Z" fill="#fff" stroke="none" /></S>],
  [30, <S><circle cx="7" cy="7" r="5.500" strokeWidth="1.800" /></S>],
  [30, <S w={17}><path d="M4 2.500h9v9H4ZM2.500 2.500H.7v9h1.800M14.500 2.500h1.800v9h-1.800" /></S>],
  [32, <S><path d="M1.500 6.500C3 1 12 1 12.500 7.800H4.500c0 4 4.500 4.500 7.500 2.700M2 7c2-2 5-2 7-.5" stroke="#1c84d6" strokeWidth="2.400" /></S>],
  [26, <S><path d="M1 2h5l1 1.500h6V12H1Z" fill="#f7d774" stroke="none" /><path d="M3 12V8h8v4H9V10H5v2Z" fill="#3f9fd8" stroke="none" /></S>],
  [28, <S><path d="M1 4h12v9L1 12Z" fill="#fff" stroke="none" /><path d="M4 4V1.500h6V4" /><path d="M4 6h2.500v2H4zM7.500 6H10v2H7.500zM4 9h2.500v2H4zM7.500 9H10v2H7.500z" fill="#111" stroke="none" /></S>],
  [28, <Chrome size={13} />],
  [28, <Tile label="Id" c="#d03a78" />],
  [28, <Tile label="Ps" c="#3aa5d8" />],
  [28, <S><path d="M3 1h8q2 0 2 2v5q0 3-3 3H7l-3 3v-3Q1 11 1 8V3q0-2 2-2Z" fill="#9b84e8" stroke="none" /><path d="M4.500 3.500c0 3 2 5 5 5.500l1-1.500-2-1-1 .7-1.300-1.500.5-1-.8-2Z" fill="#fff" stroke="none" /></S>],
  [28, <CocCoc size={16} bare />],
  [28, <S><circle cx="8" cy="6" r="5" fill="#2b6fc0" stroke="none" /><path d="M0 8c4-4 7 2 10 0l-4 5Z" fill="#e7c92e" stroke="none" /><path d="M2 5c2-3 6-4 9-1L7 7Z" fill="#4bb34a" stroke="none" /></S>],
];

const miniTasks = [
  ["CV cá ...", <Chrome size={13} />],
  ["Camta...", <S><path d="m1 4 8-3 4 7-8 4Z" stroke="#bbb" fill="#333" /><circle cx="7" cy="6.500" r="2" stroke="#9db060" /></S>],
  ["Settings", <S><circle cx="7" cy="7" r="3.300" strokeWidth="1.900" /><circle cx="7" cy="7" r="4.900" strokeWidth="1.600" strokeDasharray="2 1.848" /></S>],
  ["C:\\Use...", <S><rect x="1" y="2" width="12" height="10" rx="1" fill="#8f8a88" stroke="#ccc" /><path d="M9 4H6v2.500h3V9H6" stroke="#f09030" /></S>],
  ["web - ...", <S><path d="M7 7v6" stroke="#5b9a2a" /><circle cx="4" cy="4" r="3" fill="#78c93c" stroke="none" /><circle cx="10" cy="4" r="3" fill="#8fdc50" stroke="none" /><circle cx="4" cy="9" r="3" fill="#62b52c" stroke="none" /><circle cx="10" cy="9" r="3" fill="#78c93c" stroke="none" /></S>],
  ["MING...", <Git size={14} />],
];

export default function App() {
  return (
    <Desktop>
      <Global />
      <Background />
      <ShortcutGrid>
        {shortcuts.map(([label, icon]) => (
          <Shortcut key={label}>{icon}<ShortcutLabel>{label}</ShortcutLabel></Shortcut>
        ))}
      </ShortcutGrid>

      <PaintWindow>
        <PaintTitle><Palette size={16} /></PaintTitle>
        <PaintFile />
        <PaintRibbon />
        <PaintWork><PaintSheet /></PaintWork>
        <PaintFooter $h={17}><S w={5} h={7}><path d="M5 0v7L1 3.500Z" fill="#555" stroke="none" /></S></PaintFooter>
        <PaintFooter $h={26}><S w={7} h={7} stroke="#345"><path d="M0 3.500h7M2.500 1 0 3.500 2.500 6" /></S></PaintFooter>
      </PaintWindow>

      <Player>
        <TitleBar>
          <Title>Bai05</Title>
          <WindowButtons>
            <WindowButton><S w={9} h={9} stroke="#333"><path d="M1 7.500h6" strokeWidth="2" /></S></WindowButton>
            <WindowButton><S w={9} h={9} stroke="#333"><path d="M3 3V1h5v4H6M1 4h5v4H1Z" /><path d="M3 1.200h5M1 4.200h5" strokeWidth="1.600" /></S></WindowButton>
            <WindowButton><S w={9} h={9} stroke="#333"><path d="m1 1 7 7M8 1 1 8" strokeWidth="2" /></S></WindowButton>
          </WindowButtons>
        </TitleBar>
        <MenuBar>
          {["File", "Edit", "View", "Window", "Help"].map((m) => <span key={m}>{m}</span>)}
        </MenuBar>

        <Screen>
          <Banner>
            <Brand>
              <Leaf width="12" height="10" viewBox="0 0 12 10" fill="#4dbd5c"><path d="M1 3C3 0 7 0 8 4 6 6 4 5 4 5L3 10H0V5Z" /></Leaf>
              <span>KYNA</span><BrandSuffix>.VN</BrandSuffix>
            </Brand>
            <Tagline>Học Online Cùng Chuyên Gia</Tagline>
          </Banner>

          <Ribbon>
            {groups.map((g) => (
              <RibbonGroup key={g.cap} $w={g.w}>
                <RibbonItems $pad={g.pad}>
                  {g.items.map(([w, stub, a, b, caret, off]) => (
                    <RibbonItem key={a + b} $w={w} $off={off}>
                      <S w={22} h={5} strokeWidth="1.500">{stubs[stub]}</S>
                      <RibbonText>{a}</RibbonText>
                      <Second>{b}{caret ? <Caret $off={off} $top={b ? 2 : 4} $left={b ? 0 : 3} /> : null}</Second>
                    </RibbonItem>
                  ))}
                </RibbonItems>
                <RibbonCaption>{g.cap}{g.launch && <Launcher><LauncherIcon /></Launcher>}</RibbonCaption>
              </RibbonGroup>
            ))}
          </Ribbon>

          <MapArea>
            <MindMap />
            <VScroll><Chevron d="up" /><VThumb /><Chevron d="down" /></VScroll>
          </MapArea>
          <HScroll><Chevron d="left" /><HThumb /><Chevron d="right" /></HScroll>

          <Tabs>
            <TabArrow $w={12} $pad={3}><S w={5} h={9} stroke="#aaa" strokeWidth="1"><path d="M4 1v7L1 4.500Z" /></S></TabArrow>
            <Tab $w={365} $pad={21} $gap={16} $slant={15}><DocIcon />Sử dụng git và github cho lập trình và thiết kế web qua bài tập thực tế</Tab>
            <Tab $w={141}><DocIcon />002 - Khái niệm cơ bản*</Tab>
            <Tab $w={94}><DocIcon />003 - Cài đặt</Tab>
            <Tab $w={62} $gap={7}><DocIcon />Map4*</Tab>
            <Tab $w={178} $gap={10}><DocIcon />004 - Tạo tên miền và kho lưu trữ</Tab>
            <Tab $w={98} $ml={-7} $pad={22} $gap={8} $slant={15} $on><DocIcon />005*<LauncherIcon /><S w={7} h={7} stroke="#777"><path d="m.5.5 6 6M6.500.5l-6 6" /></S></Tab>
            <TabArrow $w={120} $pad={109}><S w={5} h={9} stroke="#aaa" strokeWidth="1"><path d="M1 1v7L4.500 4.500Z" /></S></TabArrow>
          </Tabs>

          <StatusBar>
            <StatusCell $w={18} $mr={7}><S w={12} h={12} stroke="#777" strokeWidth="1"><path d="M.5.5h11v11H.5ZM3 3h3M5 5.500h4M5 5.500v3h4" /></S></StatusCell>
            <StatusCell $w={16}><S w={12} h={12}><path d="M0 0h12v2L7.500 6v6h-3V6L0 2Z" fill="#6b6b6e" stroke="none" /></S></StatusCell>
            <StatusCell $w={6} $mr={8}><Caret $s={2} $top={0} /></StatusCell>
            <StatusCell $w={16}><S w={13} h={13} stroke="#777"><circle cx="7" cy="6.500" r="5.500" strokeDasharray="24 4" /><path d="M3 6.500h8M7 2.500v8" strokeWidth="1.600" /></S></StatusCell>
            <StatusCell $w={6} $mr={3}><Caret $s={2} $top={0} /></StatusCell>
            <StatusCell $w={16} $mr={5} $on><S w={12} h={12} stroke="#777"><path d="M.5 1.500h11v9H.5ZM2 3l3 3-3 3M10 3 7 6l3 3M5 6h2" /></S></StatusCell>
            <StatusCell $w={8}><S w={12} h={12} stroke="#777"><path d="M.5 1.500h11v9H.5ZM2 4h8M5 6h5M5 8.500h5" /></S></StatusCell>
            <StatusCell $w={42}>140%</StatusCell>
            <StatusCell $w={10}><S w={7} h={7} stroke="#aaa"><path d="M0 3.500h7" /></S></StatusCell>
            <StatusCell $w={60}><S w={44} h={14} stroke="#bbb"><path d="M0 7.500h44" /><rect x="24" y="1" width="2.500" height="12" fill="#eee" /></S></StatusCell>
            <StatusCell $w={6}><S w={7} h={7} stroke="#aaa"><path d="M0 3.500h7M3.500 0v7" /></S></StatusCell>
            <StatusCell $w={30}><S w={13} h={12} stroke="#888" strokeWidth="1"><path d="M.5.5h12v11H.5ZM3 3l2 2M10 3 8 5M3 9l2-2M10 9 8 7" /></S></StatusCell>
            <StatusCell $w={16}><S w={13} h={12}><path d="M0 1h8v10H0Z" fill="#777" stroke="none" /><path d="M9 1.500h3V6H10v5" stroke="#888" /></S></StatusCell>
            <StatusCell $w={6}><Caret $s={2} $top={0} /></StatusCell>
          </StatusBar>

          <MiniBar>
            {miniIcons.map(([w, icon], i) => <MiniCell key={i} $w={w}>{icon}</MiniCell>)}
            <MiniTask $w={61} $on>
              <S w={13} h={12}><path d="M0 1h9v10H0Z" fill="#4458b8" stroke="none" /><path d="M2 9V4l2.500 3L7 4v5" /><path d="M9 2.500h3.500v7H9" fill="#fff" /></S>Mindje...
            </MiniTask>
            <MiniCell $w={28}><Tile label="Ai" c="#e8772a" /></MiniCell>
            <MiniCell $w={28}><Tile label="An" c="#d8332a" /></MiniCell>
            <MiniTasks>
              {miniTasks.map(([t, icon]) => <MiniTask key={t}>{icon}{t}</MiniTask>)}
            </MiniTasks>
            <MiniCell $w={20}><S w={12} h={8}><path d="m1 7 5-5 5 5" /></S></MiniCell>
            <MiniCell $w={20}><S w={13} h={13}><path d="M0 0h13v13H0Z" fill="#ecc9cc" stroke="none" /><path d="m3 3 3.500 7L10 3" stroke="#c32d38" strokeWidth="2" /></S></MiniCell>
            <MiniCell $w={20}><S w={14} h={12} stroke="none"><path d="M5 0 0 8.500 2.500 12l5-8.500Z" fill="#1ea362" /><path d="M5 0h4l5 8.500H9.500Z" fill="#ffcd40" /><path d="M5 8.500h9L11.500 12h-9Z" fill="#4688f4" /></S></MiniCell>
            <MiniCell $w={20}><S w={14} h={10}><path d="M4 2.500h8.500v6H4V6M1 0v2M3 0v2" /><path d="M6 4h5v3H6ZM0 2h4v2L2.500 5.500h-1L0 4Z" fill="#fff" stroke="none" /></S></MiniCell>
            <MiniCell $w={20}><S w={12} h={12} stroke="#bbb"><path d="M1 11A10 10 0 0 1 11 1M4 11a7 7 0 0 1 7-7M7 11a4 4 0 0 1 4-4" /><circle cx="10.500" cy="10.500" r="1" fill="#fff" /></S></MiniCell>
            <MiniCell $w={20}><S w={13} h={10}><path d="M1 3.500h2l3-3v9l-3-3H1ZM8.500 3l4 4M12.500 3l-4 4" strokeWidth="1" /></S></MiniCell>
            <MiniCell $w={20}><S w={14} h={14}><path d="M0 0h14v10.500H9L7 13.500 5 10.500H0Z" fill="#fff" stroke="none" /><path d="M3 3h8M3 5.200h8M3 7.400h5" stroke="#222" strokeWidth=".9" /></S></MiniCell>
            <MiniCell $w={33}>ENG</MiniCell>
            <MiniCell $w={54}>9:50 AM</MiniCell>
            <PeekEdge />
          </MiniBar>
        </Screen>

        <TimeBar>
          <Elapsed>00:13:55</Elapsed>
          <Track><Playhead width="12" height="14" viewBox="0 0 12 14"><path d="M1 1h10L6 7Z" fill="#444" stroke="#222" /><path d="M6 6v6" stroke="#222" /></Playhead></Track>
          <TimeDots />
        </TimeBar>

        <Controls>
          <Sweep width="1088" height="36" viewBox="0 0 1088 36">
            <path d="M0 1Q220 32 544 32T1088 1V36H0Z" fill="#8e8e8e" opacity=".3" />
            <path d="M0 1Q220 32 544 32T1088 1" fill="none" stroke="#666" strokeWidth="1.500" />
          </Sweep>
          <Volume>
            <S w={14} h={14} stroke="#333"><path d="M1 5h3l4-4v12L4 9H1Z" fill="#333" stroke="none" /><path d="M9.500 4.500q1.500 2.500 0 5M11 3q2.500 4 0 8M12.500 1.500q3 5.500 0 11" strokeWidth=".9" /></S>
            <S w={50} h={14}><path d="M1 6h36" stroke="#555" strokeWidth="1.800" /><path d="M1 8h36" stroke="#f4f4f4" /><circle cx="42" cy="7.200" r="5.400" fill="#efefef" stroke="#555" /><circle cx="42" cy="7.200" r="2" fill="#333" stroke="none" /></S>
          </Volume>
          <Transport>
            <Round $d={28} $mr={5.500}><S w={12} h={12} stroke="#333"><path d="M1 1v10" /><path d="M11 1v10L2 6Z" fill="#333" stroke="none" /></S></Round>
            <Round $d={34} $mr={7}><S w={20} h={12}><path d="M10 1v10L0 6ZM20 1v10L10 6Z" fill="#333" stroke="none" /></S></Round>
            <Round $d={38} $mr={6}><S w={17} h={18}><path d="M2 1v16L17 9Z" fill="#333" stroke="none" /></S></Round>
            <Round $d={34} $mr={5.500}><S w={20} h={12}><path d="M0 1v10l10-5ZM10 1v10l10-5Z" fill="#333" stroke="none" /></S></Round>
            <Round $d={28}><S w={12} h={12} stroke="#333"><path d="M11 1v10" /><path d="M1 1v10l9-5Z" fill="#333" stroke="none" /></S></Round>
          </Transport>
          <Resize width="15" height="15" viewBox="0 0 15 15"><path d="M0 15 15 0M4 15 15 4M8 15l7-7M12 15l3-3" stroke="#333" strokeWidth="1.200" /><path d="M2 15 15 2M6 15l9-9M10 15l5-5" stroke="#fff" /></Resize>
        </Controls>
      </Player>

      <Taskbar>
        <Grip $ml={15} $mr={7} />
        <Pinned><VSCode /></Pinned>
        <Pinned><svg width="32" height="27" viewBox="0 0 32 27"><g transform="translate(1 1)"><Keys s={0.79} /></g></svg></Pinned>
        <TaskButtons>
          <TaskButton><Chrome size={32} /></TaskButton>
          <TaskButton><Sublime /></TaskButton>
          <TaskButton><WinRar /></TaskButton>
          <TaskButton $on><QuickTime /></TaskButton>
          <TaskButton><Git /></TaskButton>
          <TaskButton><Palette /></TaskButton>
        </TaskButtons>
        <Tray>
          <Grip />
          <TrayCell $w={52}><svg width="30" height="19" viewBox="0 0 30 19"><rect x="1" y="1" width="28" height="17" rx="1" fill="none" stroke="#fff" strokeWidth="2" /><path d="M4 5h22M4 9h22M4 13.500h3M23 13.500h3" stroke="#fff" strokeWidth="2.400" strokeDasharray="2.600 1.300" /><path d="M9 13.500h12" stroke="#fff" strokeWidth="2.400" /></svg></TrayCell>
          <TrayCell $w={14}><svg width="8" height="5" viewBox="0 0 8 5"><path d="M0 5 4 0l4 5Z" fill="#fff" /></svg></TrayCell>
          <TrayCell $w={34}><svg width="16" height="13" viewBox="0 0 16 13"><rect x=".5" y=".5" width="15" height="12" rx="1.500" fill="#222" stroke="#fff" strokeWidth="1.500" /><path d="M3 7.500h4M9 7.500h4M3 10h4M9 10h4" stroke="#fff" strokeWidth="1.500" /><path d="M2 4.500h12" stroke="#fff" strokeWidth="1.200" /></svg></TrayCell>
          <TrayCell $w={16}><svg width="15" height="16" viewBox="0 0 15 16" fill="none" stroke="#fff"><path d="M2 0v3M5 0v3" /><path d="M.5 3h6v4l-2 2H2.500l-2-2Z" fill="#fff" stroke="none" /><path d="M3.500 9v7" strokeWidth="1.500" /><path d="M8.500 2h5v13h-5ZM10 1h2" stroke="#2a1a20" /></svg></TrayCell>
          <TrayCell $w={32}><svg width="16" height="13" viewBox="0 0 16 13" fill="#fff"><path d="M0 11h2v2H0zM3 9.500h2V13H3zM6 7h2v6H6zM9 4.500h2V13H9zM12.500 1h2.500v12h-2.500z" /></svg></TrayCell>
          <TrayCell $w={33}>ENG</TrayCell>
          <Clock>11:12 SA<br />18/04/2019</Clock>
        </Tray>
      </Taskbar>
    </Desktop>
  );
}
